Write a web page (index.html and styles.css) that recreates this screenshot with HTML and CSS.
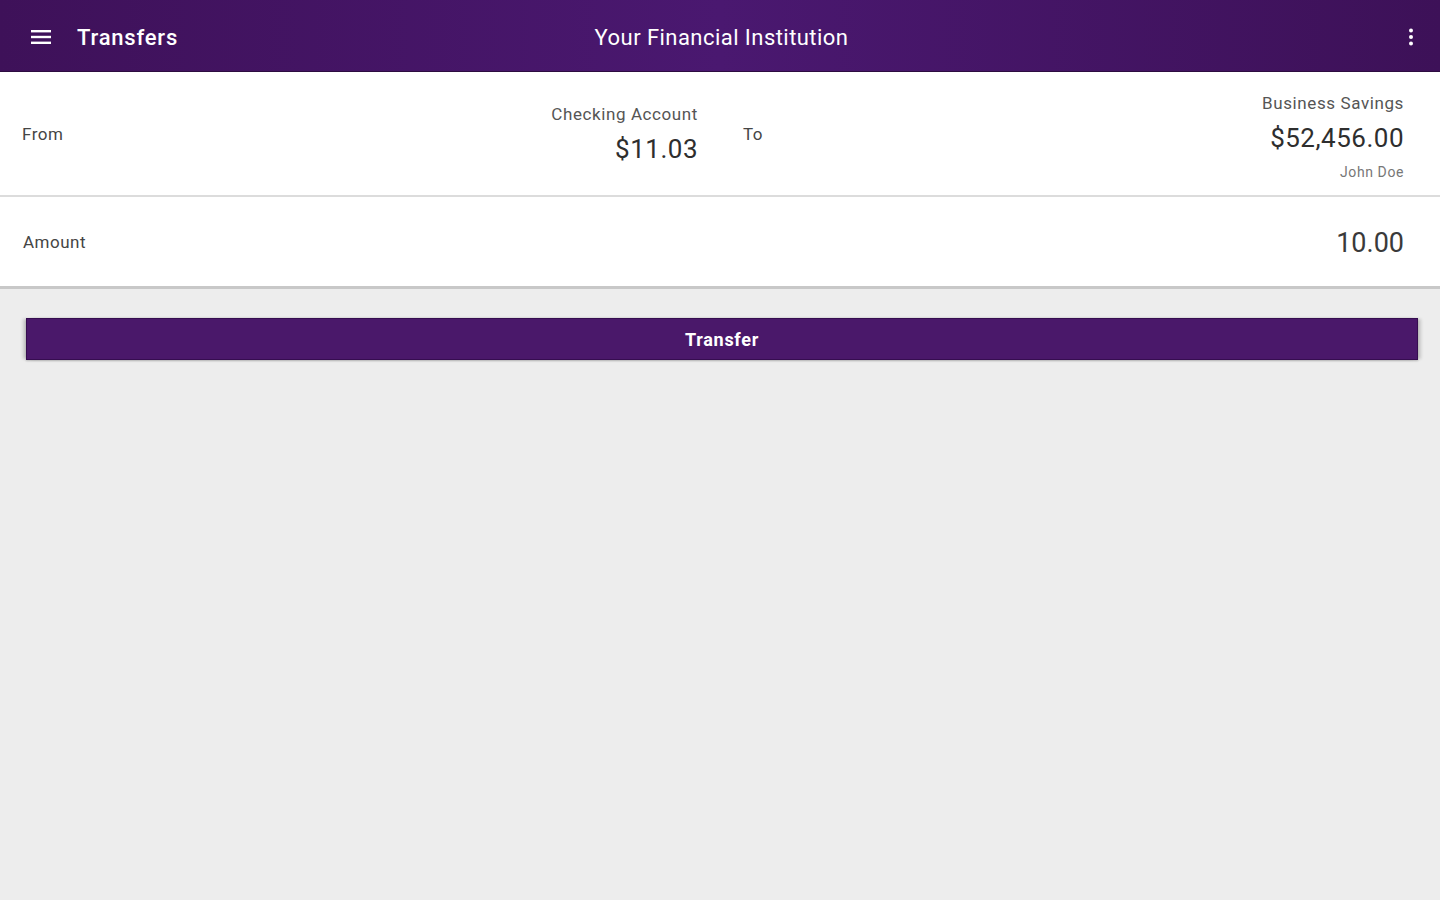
FILE: index.html
```html
<!DOCTYPE html>
<html>
<head>
<meta charset="utf-8">
<title>Transfers</title>
<link rel="stylesheet" href="styles.css">
</head>
<body>
<header class="appbar">
  <div class="appbar-left">
    <svg class="menu-icon" width="20" height="16" viewBox="0 0 20 16"><rect x="0" y="1" width="20" height="2.4" fill="#fff"/><rect x="0" y="6.8" width="20" height="2.4" fill="#fff"/><rect x="0" y="12.6" width="20" height="2.4" fill="#fff"/></svg>
    <span class="appbar-title">Transfers</span>
  </div>
  <div class="appbar-center">Your Financial Institution</div>
  <div class="appbar-right">
    <svg width="6" height="18" viewBox="0 0 6 18"><circle cx="3" cy="2.5" r="2" fill="#fff"/><circle cx="3" cy="9" r="2" fill="#fff"/><circle cx="3" cy="15.5" r="2" fill="#fff"/></svg>
  </div>
</header>
<section class="row row-accounts">
  <div class="half half-from">
    <span class="label">From</span>
    <div class="account">
      <div class="acct-name">Checking Account</div>
      <div class="acct-balance">$11.03</div>
    </div>
  </div>
  <div class="half half-to">
    <span class="label">To</span>
    <div class="account">
      <div class="acct-name">Business Savings</div>
      <div class="acct-balance">$52,456.00</div>
      <div class="acct-owner">John Doe</div>
    </div>
  </div>
</section>
<section class="row row-amount">
  <span class="label">Amount</span>
  <span class="amount">10.00</span>
</section>
<div class="actions">
  <button class="btn-transfer">Transfer</button>
</div>
</body>
</html>
```

FILE: styles.css
```css
html, body {
  margin: 0;
  padding: 0;
  height: 100%;
}
body {
  background: #ededed;
  font-family: Roboto, "Noto Sans", "Liberation Sans", sans-serif;
  color: #333;
}
.appbar {
  height: 72px;
  display: flex;
  align-items: center;
  background: linear-gradient(90deg, #3e1159 0%, #4a1870 50%, #3d1158 100%);
  color: #fff;
  border-bottom: 1px solid #2d0c40;
  box-sizing: border-box;
  padding-top: 2px;
}
.appbar-left {
  display: flex;
  align-items: center;
  padding-left: 31px;
  gap: 26px;
  flex: 1;
}
.menu-icon { display: block; }
.appbar-title {
  font-size: 22px;
  font-weight: 500;
  letter-spacing: 0.8px;
  margin-top: 1px;
}
.appbar-center {
  font-size: 22px;
  letter-spacing: 0.45px;
  flex: 0 0 auto;
  text-align: center;
  margin-left: -2px;
  margin-top: 1px;
}
.appbar-right {
  flex: 1;
  display: flex;
  justify-content: flex-end;
  padding-right: 26px;
}
.appbar-right svg { display: block; }
.row {
  background: #fff;
  display: flex;
  align-items: center;
}
.row-accounts {
  height: 123px;
  border-bottom: 2px solid #dcdcdc;
}
.half {
  width: 50%;
  box-sizing: border-box;
  display: flex;
  align-items: center;
  justify-content: space-between;
  height: 100%;
}
.half-from {
  padding: 0 22px 0 22px;
}
.half-to {
  padding: 0 36px 0 23px;
}
.label {
  font-size: 17px;
  letter-spacing: 0.5px;
  color: #454545;
}
.account {
  text-align: right;
}
.acct-name {
  font-size: 17px;
  letter-spacing: 0.6px;
  color: #555;
  line-height: 22px;
  margin-bottom: 4px;
}
.acct-balance {
  font-size: 26px;
  letter-spacing: 0.5px;
  color: #2e2e2e;
  line-height: 40px;
}
.half-from .account { margin-top: 5px; }
.half-to .account { margin-top: 11px; }
.acct-owner {
  font-size: 14px;
  letter-spacing: 0.6px;
  color: #777;
  line-height: 28px;
}
.row-amount {
  height: 89px;
  justify-content: space-between;
  padding: 0 36px 0 23px;
  border-bottom: 3px solid #c8c8c8;
}
.amount {
  font-size: 27px;
  color: #3a3a3a;
  margin-top: 2px;
}
.actions {
  padding: 29px 22px 0 26px;
}
.btn-transfer {
  display: block;
  width: 100%;
  height: 42px;
  background: #4a186a;
  color: #fff;
  border: 1px solid #360d50;
  font-family: Roboto, "Noto Sans", "Liberation Sans", sans-serif;
  font-size: 18px;
  font-weight: 700;
  letter-spacing: 0.7px;
  padding: 0;
  box-shadow: -4px 0 3px -1px rgba(0,0,0,0.16), 4px 0 3px -1px rgba(0,0,0,0.16), 0 1px 2px rgba(0,0,0,0.2);
}
```
